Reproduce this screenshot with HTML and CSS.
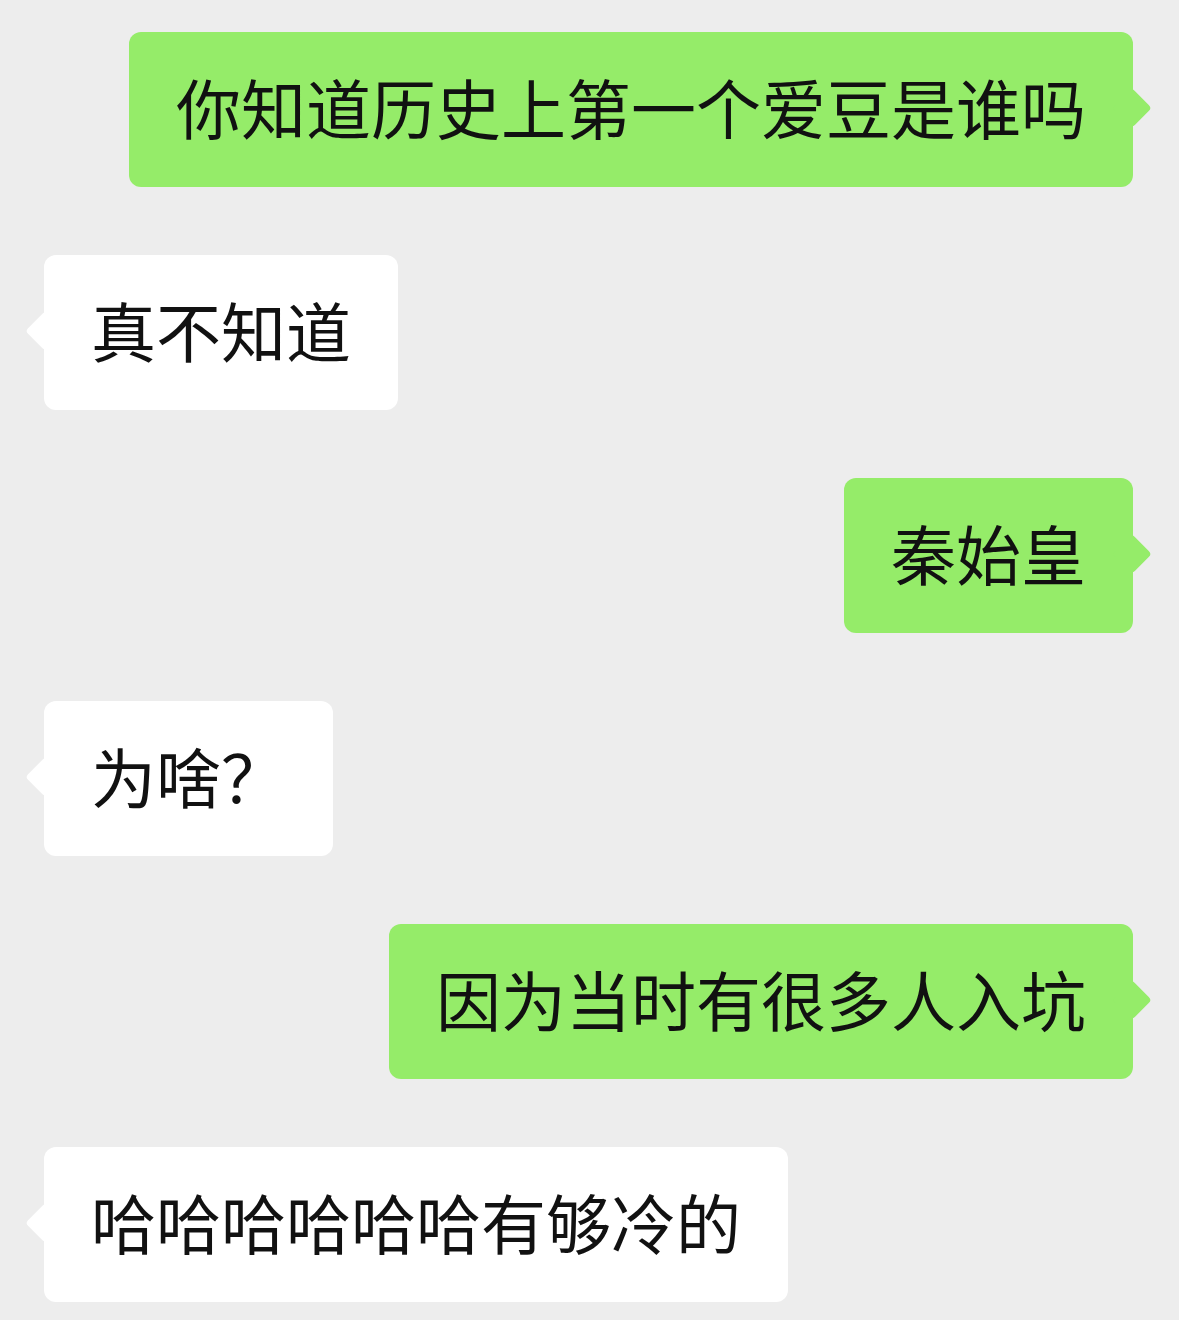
FILE: index.html
```html
<!DOCTYPE html>
<html>

<head>
    <title>Chat</title>
    <link rel="stylesheet" href="styles.css">
</head>

<body>
    <div class="chat">
        <div class="row mine">
            <div class="bubble">你知道历史上第一个爱豆是谁吗</div>
        </div>
        <div class="row theirs">
            <div class="bubble">真不知道</div>
        </div>
        <div class="row mine">
            <div class="bubble">秦始皇</div>
        </div>
        <div class="row theirs">
            <div class="bubble">为啥？</div>
        </div>
        <div class="row mine">
            <div class="bubble">因为当时有很多人入坑</div>
        </div>
        <div class="row theirs">
            <div class="bubble">哈哈哈哈哈哈有够冷的</div>
        </div>
    </div>
</body>

</html>
```

FILE: styles.css
```css
body {
    margin: 0;
    padding: 0;
    background-color: #ededed;
    font-family: "Noto Sans CJK SC", "Noto Sans", sans-serif;
}

.chat {
    display: flex;
    flex-direction: column;
    gap: 68px;
    padding: 32px 46px 20px 44px;
}

.row {
    display: flex;
}

.row.mine {
    justify-content: flex-end;
}

.row.theirs {
    justify-content: flex-start;
}

.bubble {
    position: relative;
    font-size: 65px;
    line-height: 91px;
    height: 91px;
    padding: 29px 47px 35px;
    border-radius: 12px;
    color: #111;
    white-space: nowrap;
}

/* little tail pointing to the speaker */
.bubble::after {
    content: "";
    position: absolute;
    top: 50%;
    width: 28px;
    height: 28px;
    margin-top: -16px;
    border-radius: 4px;
    transform: rotate(45deg);
}

.mine .bubble {
    background-color: #95ec69;
}

.mine .bubble::after {
    right: -13px;
    background-color: #95ec69;
}

.theirs .bubble {
    background-color: #fff;
}

.theirs .bubble::after {
    left: -13px;
    background-color: #fff;
}
```
